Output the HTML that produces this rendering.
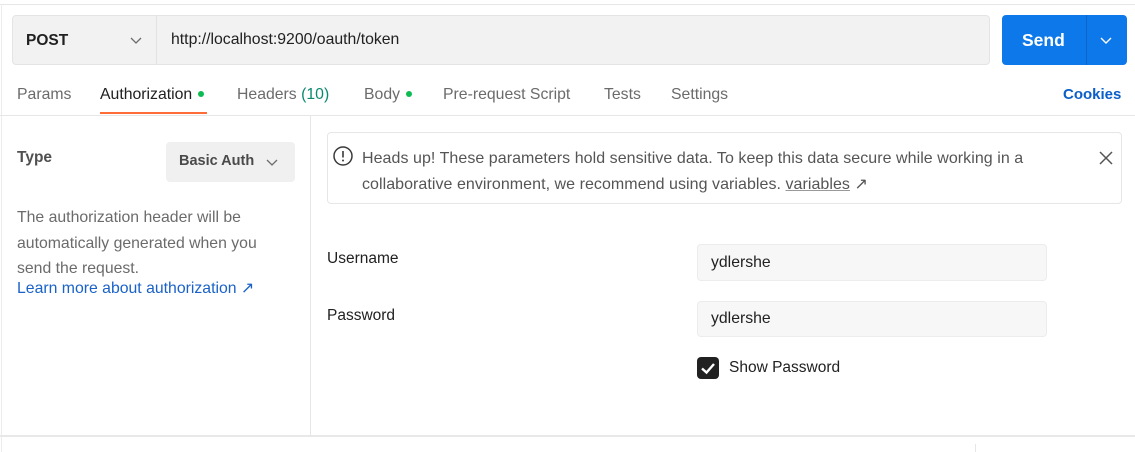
<!DOCTYPE html>
<html><head><meta charset="utf-8"><style>
*{margin:0;padding:0;box-sizing:border-box}
body{width:1135px;height:452px;overflow:hidden;background:#fff;font-family:"Liberation Sans",Arial,sans-serif;color:#212121;position:relative}
.a{position:absolute;white-space:nowrap}
.tab{position:absolute;top:86px;font-size:15.8px;color:#6b6b6b}
.dot{display:inline-block;width:6px;height:6px;border-radius:50%;background:#0cbb52;margin-left:6px;vertical-align:middle;position:relative;top:-1px}
</style></head><body>
<div class="a" style="left:0;top:4px;width:1135px;height:1px;background:#e6e6e6"></div>
<div class="a" style="left:1px;top:4px;width:1px;height:448px;background:#ececec"></div>
<div class="a" style="left:12px;top:15px;width:978px;height:50px;background:#f2f2f2;border:1px solid #e4e4e4;border-radius:4px"></div>
<div class="a" style="left:156px;top:16px;width:1px;height:48px;background:#e2e2e2"></div>
<div class="a" style="left:26px;top:32px;font-size:15.5px;font-weight:bold;color:#212121">POST</div>
<svg class="a" style="left:130px;top:35px" width="12" height="10"><path d="M1 3 L6 8 L11 3" fill="none" stroke="#6b6b6b" stroke-width="1.3"/></svg>
<div class="a" style="left:171px;top:31px;font-size:15.8px;color:#212121">http://localhost:9200/oauth/token</div>
<div class="a" style="left:1002px;top:15px;width:125px;height:50px;background:#0d78ea;border-radius:4px"></div>
<div class="a" style="left:1086px;top:15px;width:1px;height:50px;background:#0b66c8"></div>
<div class="a" style="left:1022px;top:30px;font-size:17.5px;font-weight:bold;color:#fff">Send</div>
<svg class="a" style="left:1100px;top:35px" width="12" height="10"><path d="M1 3 L6 8 L11 3" fill="none" stroke="#fff" stroke-width="1.4"/></svg>
<div class="tab" style="left:17px">Params</div>
<div class="tab" style="left:100px;color:#212121">Authorization<span class="dot"></span></div>
<div class="a" style="left:100px;top:112px;width:107px;height:2px;background:#ff6c37"></div>
<div class="tab" style="left:237px">Headers <span style="color:#0a8a70">(10)</span></div>
<div class="tab" style="left:364px">Body<span class="dot"></span></div>
<div class="tab" style="left:443px">Pre-request Script</div>
<div class="tab" style="left:604px">Tests</div>
<div class="tab" style="left:671px">Settings</div>
<div class="tab" style="left:1063px;color:#0b5fc8;font-weight:bold;font-size:15px">Cookies</div>
<div class="a" style="left:0;top:115px;width:1135px;height:1px;background:#e6e6e6"></div>
<div class="a" style="left:310px;top:116px;width:1px;height:319px;background:#e6e6e6"></div>
<div class="a" style="left:17px;top:149px;font-size:15.5px;font-weight:bold;color:#505050">Type</div>
<div class="a" style="left:166px;top:142px;width:129px;height:40px;background:#f0f0f0;border-radius:4px"></div>
<div class="a" style="left:179px;top:153px;font-size:14.5px;font-weight:bold;color:#4a4a4a">Basic Auth</div>
<svg class="a" style="left:266px;top:157px" width="12" height="10"><path d="M1 3 L6 8 L11 3" fill="none" stroke="#6b6b6b" stroke-width="1.3"/></svg>
<div class="a" style="left:17px;top:205px;font-size:15.8px;color:#6b6b6b;line-height:25.5px">The authorization header will be<br>automatically generated when you<br>send the request.</div>
<div class="a" style="left:17px;top:278px;font-size:15.8px;color:#1a62c8">Learn more about authorization ↗</div>
<div class="a" style="left:327px;top:132px;width:795px;height:72px;border:1px solid #e6e6e6;border-radius:4px"></div>
<svg class="a" style="left:332px;top:145px" width="22" height="22"><circle cx="11" cy="11" r="9" fill="none" stroke="#3a3a3a" stroke-width="1.5"/><path d="M11 6 V12.5" stroke="#3a3a3a" stroke-width="1.6"/><circle cx="11" cy="15.5" r="1" fill="#3a3a3a"/></svg>
<div class="a" style="left:362px;top:146px;font-size:16px;color:#555;line-height:26px;letter-spacing:0.05px">Heads up! These parameters hold sensitive data. To keep this data secure while working in a<br>collaborative environment, we recommend using variables. <span style="text-decoration:underline;text-decoration-color:#999">variables</span> ↗</div>
<svg class="a" style="left:1098px;top:150px" width="16" height="16"><path d="M2 2 L14 14 M14 2 L2 14" stroke="#555" stroke-width="1.5"/></svg>
<div class="a" style="left:327px;top:250px;font-size:15.5px;color:#212121">Username</div>
<div class="a" style="left:697px;top:244px;width:350px;height:37px;background:#f7f7f7;border:1px solid #ececec;border-radius:4px"></div>
<div class="a" style="left:711px;top:254px;font-size:15.8px;color:#212121">ydlershe</div>
<div class="a" style="left:327px;top:307px;font-size:15.5px;color:#212121">Password</div>
<div class="a" style="left:697px;top:301px;width:350px;height:36px;background:#f7f7f7;border:1px solid #ececec;border-radius:4px"></div>
<div class="a" style="left:711px;top:310px;font-size:15.8px;color:#212121">ydlershe</div>
<div class="a" style="left:697px;top:357px;width:22px;height:22px;background:#212121;border-radius:4px"></div>
<svg class="a" style="left:697px;top:357px" width="22" height="22"><path d="M5 11.5 L9.5 15.5 L17 7" fill="none" stroke="#fff" stroke-width="2.4"/></svg>
<div class="a" style="left:729px;top:359px;font-size:15.5px;color:#212121">Show Password</div>
<div class="a" style="left:0;top:435px;width:1135px;height:2px;background:#e8e8e8"></div>
<div class="a" style="left:975px;top:444px;width:1px;height:8px;background:#e6e6e6"></div>
</body></html>
